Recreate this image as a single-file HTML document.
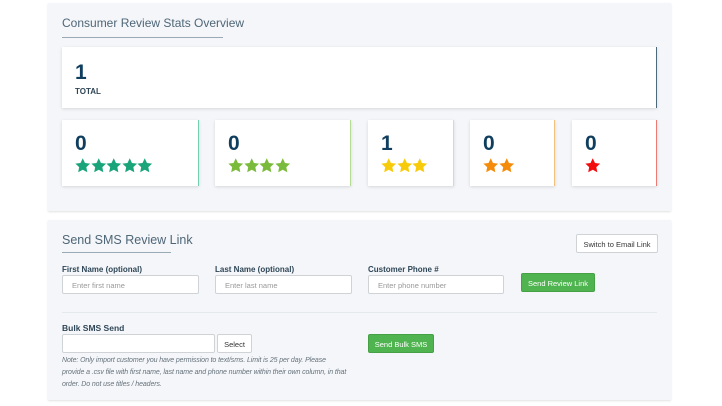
<!DOCTYPE html><html><head><style>
*{box-sizing:border-box;margin:0;padding:0}
body{width:722px;height:406px;background:#fff;font-family:"Liberation Sans",sans-serif;position:relative;overflow:hidden}
.p{position:absolute;left:48px;width:623px;background:#f4f6f9;box-shadow:0 1px 2px rgba(0,0,0,.12)}
.a{position:absolute}
.card{position:absolute;background:#fff;box-shadow:0 1px 3px rgba(0,0,0,.13)}
.num{position:absolute;left:13px;font-weight:bold;color:#0f3e5e;font-size:21px}
.st{position:absolute;left:13px;top:38px;height:16px;display:flex;gap:0}
.st svg{width:15.5px;height:15.5px}
.lbl{position:absolute;font-size:8px;font-weight:bold;color:#2f4656}
.in{position:absolute;height:19px;background:#fff;border:1px solid #cfd3d6;border-radius:2px;font-size:7.5px;color:#999;padding:5px 0 0 9px}
.btn{position:absolute;border-radius:2px;font-size:7.5px;text-align:center}
.g{background:#4fb44f;color:#fff;border:1px solid #46a046;padding-top:5px}
.w{background:#fff;border:1px solid #cfd3d6;color:#333;padding-top:5px}
</style></head><body>
<svg width="0" height="0" style="position:absolute"><defs><path id="s" d="M8 0.3l2.3 4.8 5.3.7-3.9 3.6 1 5.3L8 12.1l-4.7 2.6 1-5.3L.4 5.8l5.3-.7z"/></defs></svg>
<div class="p" style="top:3px;height:208px">
 <div class="a" style="left:14px;top:13px;font-size:12px;color:#4f6677">Consumer Review Stats Overview</div>
 <div class="a" style="left:14px;top:34px;width:161px;height:1px;background:#9aaab5"></div>
 <div class="card" style="left:14px;top:44px;width:595px;height:61px;border-right:1px solid #4d6a7c">
  <div class="num" style="top:14px">1</div>
  <div class="a" style="left:13px;top:40px;font-size:8px;font-weight:bold;color:#2f4656">TOTAL</div>
 </div>
 <div class="card" style="left:14px;top:117px;width:137px;height:66px;border-right:1px solid #74cfae"><div class="num" style="top:12px">0</div><div class="st" style="fill:#1aa479"><svg viewBox="0 0 16 16"><use href="#s"/></svg><svg viewBox="0 0 16 16"><use href="#s"/></svg><svg viewBox="0 0 16 16"><use href="#s"/></svg><svg viewBox="0 0 16 16"><use href="#s"/></svg><svg viewBox="0 0 16 16"><use href="#s"/></svg></div></div>
 <div class="card" style="left:167px;top:117px;width:136px;height:66px;border-right:1px solid #b4dc94"><div class="num" style="top:12px">0</div><div class="st" style="fill:#7bbb3c"><svg viewBox="0 0 16 16"><use href="#s"/></svg><svg viewBox="0 0 16 16"><use href="#s"/></svg><svg viewBox="0 0 16 16"><use href="#s"/></svg><svg viewBox="0 0 16 16"><use href="#s"/></svg></div></div>
 <div class="card" style="left:320px;top:117px;width:86px;height:66px;border-right:1px solid #f1dc7c"><div class="num" style="top:12px">1</div><div class="st" style="fill:#f7cb0a"><svg viewBox="0 0 16 16"><use href="#s"/></svg><svg viewBox="0 0 16 16"><use href="#s"/></svg><svg viewBox="0 0 16 16"><use href="#s"/></svg></div></div>
 <div class="card" style="left:422px;top:117px;width:85px;height:66px;border-right:1px solid #f4c07d"><div class="num" style="top:12px">0</div><div class="st" style="fill:#f58b0a"><svg viewBox="0 0 16 16"><use href="#s"/></svg><svg viewBox="0 0 16 16"><use href="#s"/></svg></div></div>
 <div class="card" style="left:524px;top:117px;width:85px;height:66px;border-right:1px solid #ec7b76"><div class="num" style="top:12px">0</div><div class="st" style="fill:#f20c0c"><svg viewBox="0 0 16 16"><use href="#s"/></svg></div></div>
</div>
<div class="p" style="top:220px;height:180px">
 <div class="a" style="left:14px;top:13px;font-size:12.5px;color:#4f6677">Send SMS Review Link</div>
 <div class="a" style="left:14px;top:32px;width:109px;height:1px;background:#9aaab5"></div>
 <div class="btn w" style="left:528px;top:14px;width:82px;height:19px">Switch to Email Link</div>
 <div class="lbl" style="left:14px;top:45px">First Name (optional)</div>
 <div class="lbl" style="left:167px;top:45px">Last Name (optional)</div>
 <div class="lbl" style="left:320px;top:45px">Customer Phone #</div>
 <div class="in" style="left:14px;top:55px;width:137px">Enter first name</div>
 <div class="in" style="left:167px;top:55px;width:137px">Enter last name</div>
 <div class="in" style="left:320px;top:55px;width:136px">Enter phone number</div>
 <div class="btn g" style="left:473px;top:53px;width:74px;height:19px">Send Review Link</div>
 <div class="a" style="left:14px;top:92px;width:595px;height:1px;background:#e6e9ec"></div>
 <div class="lbl" style="left:14px;top:103px;font-size:8.5px">Bulk SMS Send</div>
 <div class="in" style="left:14px;top:114px;width:153px"></div>
 <div class="btn w" style="left:169px;top:114px;width:35px;height:19px">Select</div>
 <div class="btn g" style="left:320px;top:114px;width:66px;height:19px">Send Bulk SMS</div>
 <div class="a" style="left:14px;top:135px;width:300px;font-size:7px;font-style:italic;color:#66727c;line-height:12px;letter-spacing:-0.1px">Note: Only import customer you have permission to text/sms. Limit is 25 per day. Please<br>provide a .csv file with first name, last name and phone number within their own column, in that<br>order. Do not use titles / headers.</div>
</div>
</body></html>
